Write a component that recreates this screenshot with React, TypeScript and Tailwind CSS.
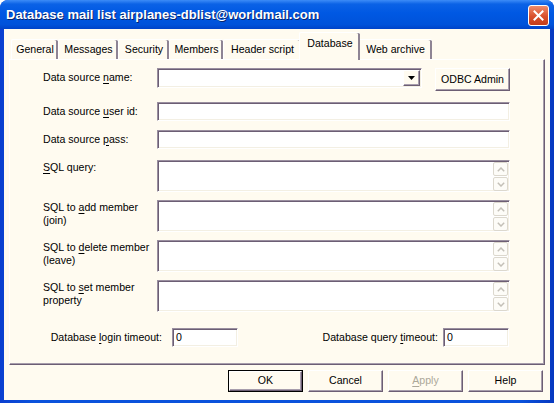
import type { ReactNode } from "react";

const sunken =
  "border border-t-[#9a8fa0] border-l-[#9a8fa0] border-r-white border-b-white bg-white shadow-[inset_1px_1px_0_#6c5e74,inset_-1px_-1px_0_#f3efe3]";

const raised =
  "border border-t-white border-l-white border-r-[#6c5e74] border-b-[#6c5e74] bg-[#fffbf0] shadow-[inset_-1px_-1px_0_#a79dac]";

const tabs = [
  { label: "General", width: "w-[47px]" },
  { label: "Messages", width: "w-[60px]" },
  { label: "Security", width: "w-[51px]" },
  { label: "Members", width: "w-[54px]" },
  { label: "Header script", width: "w-[78px]" },
  { label: "Database", width: "w-[56px]", active: true },
  { label: "Web archive", width: "w-[74px]" },
];

function Key({ children }: { children: ReactNode }) {
  return <span className="underline underline-offset-[2px]">{children}</span>;
}

function Chevron({ down }: { down?: boolean }) {
  return (
    <svg width="8" height="5" viewBox="0 0 8 5">
      <polyline
        points={down ? "0.8,0.8 4,4 7.2,0.8" : "0.8,4.2 4,1 7.2,4.2"}
        fill="none"
        stroke="#c4c0b8"
        strokeWidth="1.5"
      />
    </svg>
  );
}

function ScrollArrow({ down }: { down?: boolean }) {
  return (
    <div className="flex h-[14px] w-[15px] items-center justify-center rounded-[2px] border border-[#dcd8ce] bg-[#fdfcf8]">
      <Chevron down={down} />
    </div>
  );
}

function MemoBox() {
  return (
    <div className={`flex h-[32px] flex-1 justify-end ${sunken}`}>
      <div className="flex flex-col gap-[1px] pr-[1px] pt-[1px]">
        <ScrollArrow />
        <ScrollArrow down />
      </div>
    </div>
  );
}

function MemoRow({ children }: { children: ReactNode }) {
  return (
    <div className="flex items-start">
      <div className="w-[114px] pt-[1px] leading-[13px]">{children}</div>
      <MemoBox />
    </div>
  );
}

function FieldRow({ children }: { children: ReactNode }) {
  return (
    <div className="flex items-center">
      <div className="w-[114px]">
        <span>{children}</span>
      </div>
      <div className={`h-[19px] flex-1 ${sunken}`} />
    </div>
  );
}

function DialogButton({
  children,
  primary,
  disabled,
}: {
  children: ReactNode;
  primary?: boolean;
  disabled?: boolean;
}) {
  return (
    <div
      className={`flex h-[22px] w-[75px] ${
        primary ? "border border-black" : ""
      }`}
    >
      <div
        className={`flex flex-1 items-center justify-center ${raised} ${
          disabled ? "text-[#aca899]" : "text-black"
        }`}
      >
        <span>{children}</span>
      </div>
    </div>
  );
}

export default function App() {
  return (
    <div className="flex h-[403px] w-[554px] flex-col overflow-hidden rounded-t-[8px] bg-[linear-gradient(90deg,#0a3fd0,#0a52dc_6%,#0a52dc_94%,#0638c0)] font-['Liberation_Sans',Arial,sans-serif] text-[10.6px] text-black">
      <div className="flex h-[29px] shrink-0 items-center justify-between bg-[linear-gradient(180deg,#3d8cf7_0%,#0b62e6_14%,#0058e3_45%,#0052da_85%,#0043c8_100%)]">
        <span className="pl-[6px] text-[13px] font-bold text-white [text-shadow:1px_1px_0_#0a246a]">
          Database mail list airplanes-dblist@worldmail.com
        </span>
        <div className="mr-[5px] mt-[1px] flex h-[21px] w-[21px] items-center justify-center rounded-[3px] border border-white bg-[linear-gradient(180deg,#ef8c6c,#d9502c_55%,#c23c1a)]">
          <svg width="11" height="11" viewBox="0 0 11 11">
            <path
              d="M1.5 1.5 L9.5 9.5 M9.5 1.5 L1.5 9.5"
              stroke="white"
              strokeWidth="2"
              strokeLinecap="square"
            />
          </svg>
        </div>
      </div>

      <div className="mx-[4px] mb-[3px] flex flex-1 flex-col bg-[#fffbf0] px-[5px] pt-[7px]">
        <div className="flex h-[23px] items-end pl-[2px]">
          {tabs.map((tab) =>
            tab.active ? (
              <div
                key={tab.label}
                className={`relative z-10 -mx-[2px] -mb-[1px] flex h-[24px] ${tab.width} box-content items-start justify-center rounded-t-[2px] border-l border-t border-white bg-[#fffbf0] px-[2px] pt-[3px] shadow-[inset_-2px_0_0_#8e8494]`}
              >
                {tab.label}
              </div>
            ) : (
              <div
                key={tab.label}
                className={`flex h-[20px] ${tab.width} items-center justify-center rounded-t-[2px] border-l border-t border-white shadow-[inset_-2px_0_0_#8e8494]`}
              >
                {tab.label}
              </div>
            ),
          )}
        </div>

        <div className="flex flex-1 flex-col border border-t-white border-l-white border-r-[#6c5e74] border-b-[#6c5e74] pl-[33px] pr-[34px] pt-[8px] shadow-[inset_-1px_-1px_0_#a79dac]">
          <div className="flex items-start">
            <div className="flex h-[20px] w-[114px] items-center">
              <span>
                Data source <Key>n</Key>ame:
              </span>
            </div>
            <div className={`flex h-[20px] w-[265px] justify-end ${sunken}`}>
              <div
                className={`mr-[1px] mt-[1px] flex h-[16px] w-[17px] items-center justify-center ${raised}`}
              >
                <svg width="7" height="4" viewBox="0 0 7 4">
                  <polygon points="0,0 7,0 3.5,4" fill="black" />
                </svg>
              </div>
            </div>
            <div className="ml-[13px] flex-1">
              <div className={`flex h-[23px] items-center justify-center ${raised}`}>
                ODBC Admin
              </div>
            </div>
          </div>

          <div className="mt-[11px]">
            <FieldRow>
              Data source <Key>u</Key>ser id:
            </FieldRow>
          </div>
          <div className="mt-[9px]">
            <FieldRow>
              Data source <Key>p</Key>ass:
            </FieldRow>
          </div>

          <div className="mt-[11px] flex flex-col gap-[8px]">
            <MemoRow>
              <Key>S</Key>QL query:
            </MemoRow>
            <MemoRow>
              SQL to <Key>a</Key>dd member
              <br />
              (join)
            </MemoRow>
            <MemoRow>
              SQL to <Key>d</Key>elete member
              <br />
              (leave)
            </MemoRow>
            <MemoRow>
              SQL to <Key>s</Key>et member
              <br />
              property
            </MemoRow>
          </div>

          <div className="mt-[16px] flex items-center justify-between pr-[1px]">
            <div className="flex items-center">
              <div className="w-[129px] pr-[10px] text-right">
                Database <Key>l</Key>ogin timeout:
              </div>
              <div className={`flex h-[19px] w-[66px] items-center pl-[3px] ${sunken}`}>
                0
              </div>
            </div>
            <div className="flex items-center">
              <div className="pr-[5px] text-right">
                Database query <Key>t</Key>imeout:
              </div>
              <div className={`flex h-[19px] w-[66px] items-center pl-[3px] ${sunken}`}>
                0
              </div>
            </div>
          </div>
        </div>

        <div className="mb-[8px] mt-[5px] flex justify-end gap-[5px] pr-[2px]">
          <DialogButton primary>OK</DialogButton>
          <DialogButton>Cancel</DialogButton>
          <DialogButton disabled>
            <Key>A</Key>pply
          </DialogButton>
          <DialogButton>Help</DialogButton>
        </div>
      </div>
    </div>
  );
}
